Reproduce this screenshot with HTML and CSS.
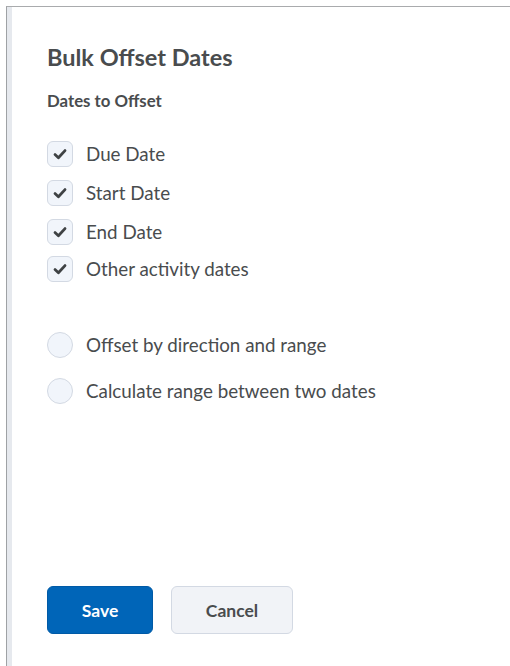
FILE: index.html
```html
<!DOCTYPE html>
<html lang="en">
<head>
<meta charset="utf-8">
<title>Bulk Offset Dates</title>
<link rel="stylesheet" href="styles.css">
</head>
<body>
<div class="frame">
  <div class="rail"></div>
  <div class="dialog">
    <h1 class="title">Bulk Offset Dates</h1>
    <h2 class="section-label">Dates to Offset</h2>

    <ul class="checks">
      <li class="check-row">
        <span class="checkbox"><svg viewBox="0 0 16 16" width="16" height="16"><path d="M3 8.6 L6.4 11.8 L13 4.6" fill="none" stroke="#3f4244" stroke-width="2.8" stroke-linecap="round" stroke-linejoin="round"/></svg></span>
        <span class="label">Due Date</span>
      </li>
      <li class="check-row">
        <span class="checkbox"><svg viewBox="0 0 16 16" width="16" height="16"><path d="M3 8.6 L6.4 11.8 L13 4.6" fill="none" stroke="#3f4244" stroke-width="2.8" stroke-linecap="round" stroke-linejoin="round"/></svg></span>
        <span class="label">Start Date</span>
      </li>
      <li class="check-row">
        <span class="checkbox"><svg viewBox="0 0 16 16" width="16" height="16"><path d="M3 8.6 L6.4 11.8 L13 4.6" fill="none" stroke="#3f4244" stroke-width="2.8" stroke-linecap="round" stroke-linejoin="round"/></svg></span>
        <span class="label">End Date</span>
      </li>
      <li class="check-row check-row-last">
        <span class="checkbox"><svg viewBox="0 0 16 16" width="16" height="16"><path d="M3 8.6 L6.4 11.8 L13 4.6" fill="none" stroke="#3f4244" stroke-width="2.8" stroke-linecap="round" stroke-linejoin="round"/></svg></span>
        <span class="label">Other activity dates</span>
      </li>
    </ul>

    <ul class="radios">
      <li class="radio-row">
        <span class="radio"></span>
        <span class="label">Offset by direction and range</span>
      </li>
      <li class="radio-row">
        <span class="radio"></span>
        <span class="label">Calculate range between two dates</span>
      </li>
    </ul>

    <div class="actions">
      <button class="btn btn-primary" type="button">Save</button>
      <button class="btn btn-secondary" type="button">Cancel</button>
    </div>
  </div>
</div>
</body>
</html>
```

FILE: styles.css
```css
html, body {
  margin: 0;
  padding: 0;
  background: #ffffff;
}

body {
  font-family: Lato, "Open Sans", sans-serif;
  color: #494c4e;
  height: 666px;
  overflow: hidden;
}

/* host page edge: thin grey outline with a pale rail beside the dialog */
.frame {
  display: flex;
  margin: 6px 0 0 6px;
  height: 659px;
  border-top: 1px solid #a9abad;
  border-left: 1px solid #9fa2a5;
}

.rail {
  width: 5px;
  flex: none;
  background: #e6e9ee;
}

.dialog {
  flex: 1;
  display: flex;
  flex-direction: column;
  padding: 0 0 0 35px;
}

.title {
  margin: 35px 0 0;
  font-size: 23.5px;
  line-height: 30px;
  font-weight: 700;
  color: #494c4e;
}

.section-label {
  margin: 19px 0 0;
  font-size: 16.8px;
  line-height: 20px;
  font-weight: 700;
  color: #494c4e;
}

.checks,
.radios {
  list-style: none;
  margin: 0;
  padding: 0;
}

.checks {
  margin-top: 30px;
  display: flex;
  flex-direction: column;
  gap: 13px;
}

.check-row-last {
  margin-top: -2px;
}

.check-row,
.radio-row {
  display: flex;
  align-items: center;
  gap: 13px;
  height: 26px;
}

.checkbox {
  width: 26px;
  height: 26px;
  box-sizing: border-box;
  border: 1px solid #d3d9e3;
  border-radius: 6px;
  background: #f1f5fb;
  display: flex;
  align-items: center;
  justify-content: center;
}

.label {
  font-size: 18.8px;
  line-height: 24px;
  color: #494c4e;
}

.radios {
  margin-top: 50px;
  display: flex;
  flex-direction: column;
  gap: 20px;
}

.radio {
  width: 26px;
  height: 26px;
  box-sizing: border-box;
  border: 1px solid #d3d9e3;
  border-radius: 50%;
  background: #f1f5fb;
}

.actions {
  margin-top: auto;
  margin-bottom: 32px;
  display: flex;
  gap: 18px;
}

.btn {
  height: 48px;
  box-sizing: border-box;
  border-radius: 6px;
  font-family: Lato, "Open Sans", sans-serif;
  font-size: 17.5px;
  font-weight: 700;
  cursor: pointer;
}

.btn-primary {
  width: 106px;
  background: #0065b8;
  border: 1px solid #005aa6;
  color: #ffffff;
}

.btn-secondary {
  width: 122px;
  background: #f1f3f7;
  border: 1px solid #d3d9e3;
  color: #494c4e;
}
```
